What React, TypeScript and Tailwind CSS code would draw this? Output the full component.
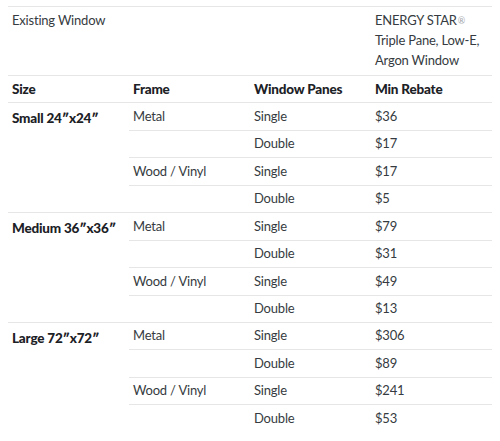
const rows = [
  {
    size: "Small 24″x24″",
    items: [
      ["Metal", "Single", "$36"],
      ["", "Double", "$17"],
      ["Wood / Vinyl", "Single", "$17"],
      ["", "Double", "$5"],
    ],
  },
  {
    size: "Medium 36″x36″",
    items: [
      ["Metal", "Single", "$79"],
      ["", "Double", "$31"],
      ["Wood / Vinyl", "Single", "$49"],
      ["", "Double", "$13"],
    ],
  },
  {
    size: "Large 72″x72″",
    items: [
      ["Metal", "Single", "$306"],
      ["", "Double", "$89"],
      ["Wood / Vinyl", "Single", "$241"],
      ["", "Double", "$53"],
    ],
  },
];

// shared cell look: fixed row height, light top rule
const cell = "h-[27.45px] px-[4px] py-0 align-middle border-t border-[#e6e6e6] whitespace-nowrap";
const headCell = `${cell} text-left font-black text-[13.5px] text-[#1c2126]`;

export default function App() {
  return (
    <div className="bg-white w-[500px] h-[441px] pt-[6px] px-[8px] text-[13px] tracking-[-0.2px] text-[#363b41] font-['Lato','Liberation_Sans',sans-serif]">
      <table className="w-full border-collapse table-fixed">
        <thead>
          <tr>
            <th colSpan={3} className="border-t border-[#e6e6e6] px-[4px] pt-[3px] pb-[5px] text-left align-top font-normal leading-[20px]">
              Existing Window
            </th>
            <th className="border-t border-[#e6e6e6] px-[4px] pt-[3px] pb-[5px] text-left align-top font-normal leading-[20px] whitespace-nowrap">
              ENERGY STAR
              <sup className="ml-[1px] text-[9px] text-[#a0a5ab] relative top-[-1px]">®</sup>
              <br />
              Triple Pane, Low-E,
              <br />
              Argon Window
            </th>
          </tr>
          <tr>
            <th className={headCell}>Size</th>
            <th className={headCell}>Frame</th>
            <th className={headCell}>Window Panes</th>
            <th className={headCell}>Min Rebate</th>
          </tr>
        </thead>
        <tbody>
          {rows.map((group) =>
            group.items.map((item, i) => (
              <tr key={group.size + i}>
                {i === 0 && (
                  <td
                    rowSpan={4}
                    className={`${cell} align-top pt-[5px] font-black text-[13.5px] text-[#1c2126]`}
                  >
                    {group.size}
                  </td>
                )}
                <td className={cell}>{item[0]}</td>
                <td className={cell}>{item[1]}</td>
                <td className={cell}>{item[2]}</td>
              </tr>
            ))
          )}
        </tbody>
      </table>
    </div>
  );
}
